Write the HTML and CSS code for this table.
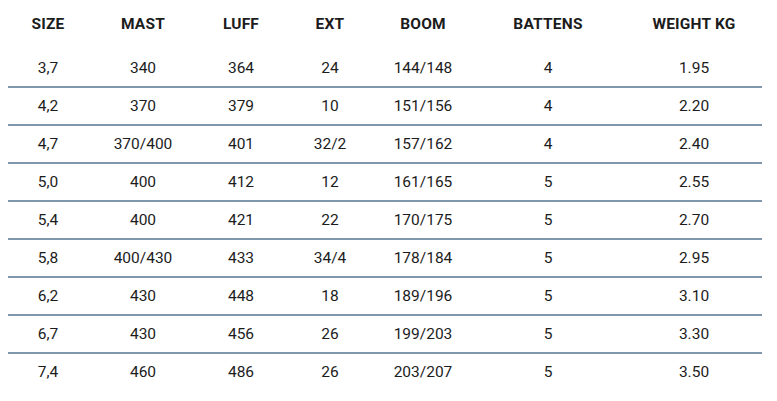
FILE: index.html
```html
<!DOCTYPE html>
<html>
<head>
<meta charset="utf-8">
<link rel="stylesheet" href="styles.css">
</head>
<body>
<table class="spec">
  <colgroup>
    <col class="c1"><col class="c2"><col class="c3"><col class="c4"><col class="c5"><col class="c6"><col class="c7">
  </colgroup>
  <thead>
    <tr><th>SIZE</th><th>MAST</th><th>LUFF</th><th>EXT</th><th>BOOM</th><th>BATTENS</th><th>WEIGHT KG</th></tr>
  </thead>
  <tbody>
    <tr><td>3,7</td><td>340</td><td>364</td><td>24</td><td>144/148</td><td>4</td><td>1.95</td></tr>
    <tr><td>4,2</td><td>370</td><td>379</td><td>10</td><td>151/156</td><td>4</td><td>2.20</td></tr>
    <tr><td>4,7</td><td>370/400</td><td>401</td><td>32/2</td><td>157/162</td><td>4</td><td>2.40</td></tr>
    <tr><td>5,0</td><td>400</td><td>412</td><td>12</td><td>161/165</td><td>5</td><td>2.55</td></tr>
    <tr><td>5,4</td><td>400</td><td>421</td><td>22</td><td>170/175</td><td>5</td><td>2.70</td></tr>
    <tr><td>5,8</td><td>400/430</td><td>433</td><td>34/4</td><td>178/184</td><td>5</td><td>2.95</td></tr>
    <tr><td>6,2</td><td>430</td><td>448</td><td>18</td><td>189/196</td><td>5</td><td>3.10</td></tr>
    <tr><td>6,7</td><td>430</td><td>456</td><td>26</td><td>199/203</td><td>5</td><td>3.30</td></tr>
    <tr class="last"><td>7,4</td><td>460</td><td>486</td><td>26</td><td>203/207</td><td>5</td><td>3.50</td></tr>
  </tbody>
</table>
</body>
</html>
```
FILE: styles.css
```css
html, body {
  margin: 0;
  padding: 0;
  background: #ffffff;
}
body {
  padding: 0 15px 0 8px;
  font-family: Roboto, "Liberation Sans", sans-serif;
  color: #1c1c1c;
}
.spec {
  width: 754px;
  border-collapse: collapse;
  table-layout: fixed;
}
.c1 { width: 80px; }
.c2 { width: 110px; }
.c3 { width: 86px; }
.c4 { width: 92px; }
.c5 { width: 94px; }
.c6 { width: 156px; }
.c7 { width: 136px; }
.spec th {
  height: 48px;
  padding: 0;
  font-size: 15.5px;
  font-weight: 700;
  text-align: center;
  vertical-align: middle;
  letter-spacing: 0.2px;
}
.spec td {
  height: 36px;
  padding: 0;
  font-size: 15.5px;
  font-weight: 400;
  text-align: center;
  vertical-align: middle;
  border-bottom: 2px solid #7f96ab;
}
.spec tbody tr:first-child td { height: 36px; padding-top: 2px; }
.spec tr.last td { border-bottom: none; }
```
